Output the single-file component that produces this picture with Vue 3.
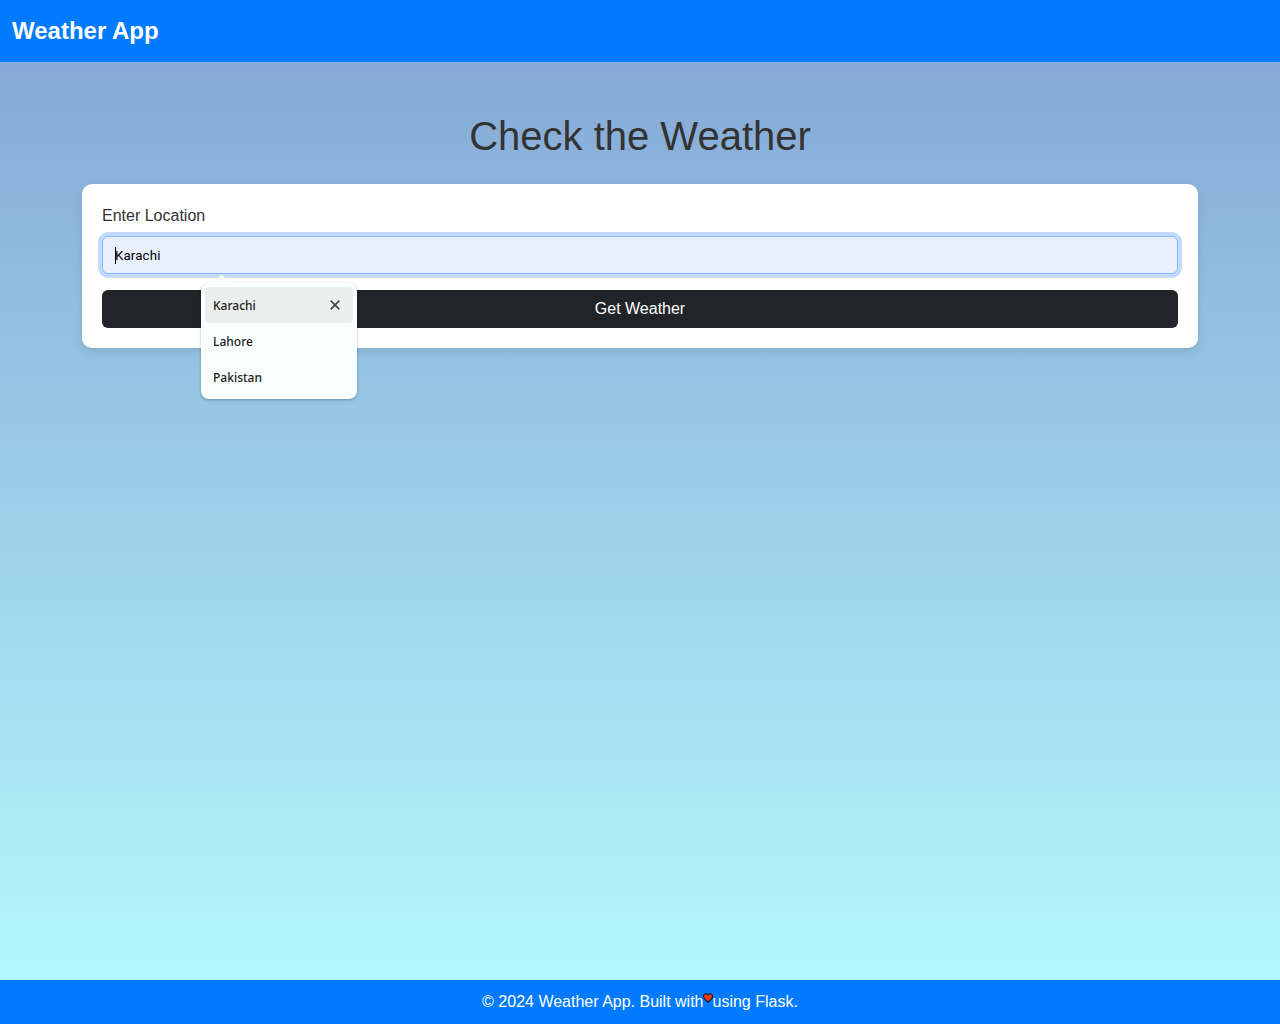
<script setup>
import { ref } from 'vue'

const location = ref('Karachi')
const suggestions = ref(['Karachi', 'Lahore', 'Pakistan'])
</script>

<template>
  <div class="page">
    <header class="navbar"><span class="brand">Weather App</span></header>
    <main class="container">
      <h1>Check the Weather</h1>
      <form class="card" @submit.prevent>
        <label for="location">Enter Location</label>
        <div class="field">
          <div id="location" class="control" role="textbox" tabindex="0"><i class="caret"></i><span class="value">{{ location }}</span></div>
          <div class="popup">
            <svg class="arrow" width="18" height="10" viewBox="0 0 18 10">
              <path d="M0 10L7.2 1.4Q8.5 0 9.8 1.4L17 10Z" fill="#f8fffe" />
            </svg>
            <div v-for="(s, i) in suggestions" :key="s" class="option" :class="{ active: i === 0 }">
              <span class="name">{{ s }}</span>
              <svg v-if="i === 0" width="10" height="10" viewBox="0 0 10 10">
                <path d="M.7 .7L9.3 9.3M9.3 .7L.7 9.3" stroke="#484c4c" stroke-width="1.8" />
              </svg>
            </div>
          </div>
        </div>
        <button type="submit">Get Weather</button>
      </form>
    </main>
    <footer>
      <span>© 2024 Weather App. Built with</span>
      <svg class="heart" width="10" height="10" viewBox="0 0 10 10">
        <path d="M5 9.3L1.2 5.4Q.5 4.5.5 3.2Q.6 .8 2.7.7Q4.3.7 5 1.8Q5.7.7 7.3.7Q9.4.8 9.5 3.2Q9.5 4.5 8.8 5.4Z" fill="#f03a17" stroke="#16162b" stroke-width="1.1" />
      </svg>
      <span>using Flask.</span>
    </footer>
  </div>
</template>

<style>
body {
  margin: 0;
}
</style>

<style scoped>
* {
  box-sizing: border-box;
}
.page {
  height: 1024px;
  display: flex;
  flex-direction: column;
  font: 16px/24px "Liberation Sans", Arial, sans-serif;
  color: #333;
  background: linear-gradient(to bottom, #83a4d4, #b6fbff);
}
.navbar {
  height: 62px;
  flex: none;
  display: flex;
  align-items: center;
  padding: 0 12px;
  background: #007bff;
}
.brand {
  color: #fff;
  font-size: 24px;
  line-height: 36px;
  font-weight: 700;
}
.container {
  flex: 1;
  width: 1116px;
  margin: 0 auto;
  padding-top: 50px;
}
h1 {
  margin: 0 0 24px;
  font-size: 40px;
  line-height: 48px;
  font-weight: 400;
  text-align: center;
}
.card {
  height: 164px;
  padding: 20px;
  border-radius: 10px;
  background: #fff;
  box-shadow: 0 4px 8px rgba(0, 0, 0, 0.1);
}
label {
  display: block;
  margin-bottom: 8px;
}
.field {
  position: relative;
  margin-bottom: 16px;
}
.control {
  height: 38px;
  display: flex;
  align-items: center;
  padding: 0 12px;
  border: 1px solid #86b7fe;
  border-radius: 6px;
  background: #e8f0fe;
  box-shadow: 0 0 0 4px #c2dbfe;
  color: #000;
  font: 13.333px/16px Roboto, "Liberation Sans", sans-serif;
  letter-spacing: 0.12px;
  outline: none;
}
.value {
  padding-top: 2px;
}
.caret {
  width: 1px;
  height: 17px;
  margin-right: -1px;
  background: #000;
}
button {
  display: block;
  width: 100%;
  height: 38px;
  padding: 0;
  border: 0;
  border-radius: 6px;
  background: #212529;
  color: #fff;
  font: inherit;
}
.popup {
  position: absolute;
  z-index: 2;
  left: 99px;
  top: 47px;
  width: 156px;
  height: 116px;
  padding: 4px;
  border-radius: 8px;
  background: #f8fffe;
  box-shadow: 0 1px 3px rgba(0, 0, 0, 0.28);
}
.arrow {
  position: absolute;
  left: 12px;
  top: -9px;
}
.option {
  height: 36px;
  display: flex;
  align-items: center;
  justify-content: space-between;
  padding: 0 13px 0 8px;
  border-radius: 4px;
  color: #1b1b1b;
  font: 500 12px/18px "Noto Sans", "Open Sans", sans-serif;
}
.name {
  padding-top: 2px;
}
.option.active {
  background: #ebf0ef;
}
footer {
  height: 44px;
  flex: none;
  display: flex;
  align-items: center;
  justify-content: center;
  background: #007bff;
  color: #fff;
}
.heart {
  margin: 0 -0.5px 8px;
}
</style>
